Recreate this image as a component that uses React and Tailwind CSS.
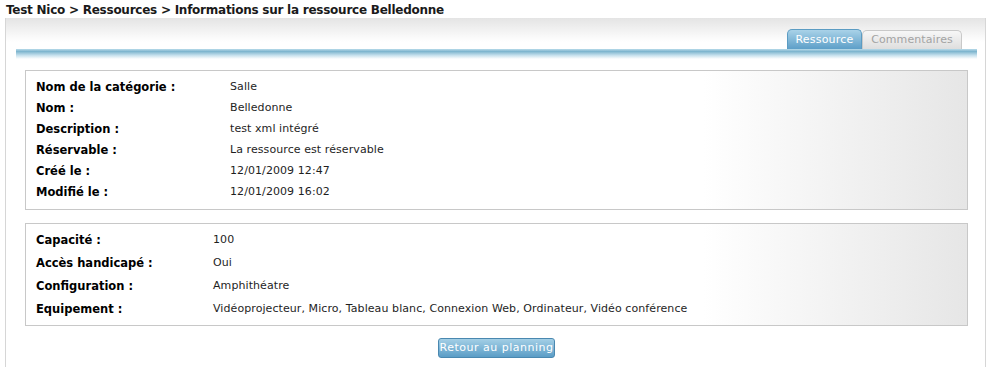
export default function App() {
  const rows1 = [
    ["Nom de la catégorie :", "Salle"],
    ["Nom :", "Belledonne"],
    ["Description :", "test xml intégré"],
    ["Réservable :", "La ressource est réservable"],
    ["Créé le :", "12/01/2009 12:47"],
    ["Modifié le :", "12/01/2009 16:02"],
  ];
  const rows2 = [
    ["Capacité :", "100"],
    ["Accès handicapé :", "Oui"],
    ["Configuration :", "Amphithéatre"],
    ["Equipement :", "Vidéoprojecteur, Micro, Tableau blanc, Connexion Web, Ordinateur, Vidéo conférence"],
  ];
  return (
    <div className="w-[992px] h-[367px] overflow-hidden bg-white text-[#111] font-['DejaVu_Sans',sans-serif]">
      <div className="pl-[6px] pt-[3px] h-[18px] text-[12px] leading-[15px] font-bold tracking-[-0.25px] text-[#1a1a1a]">
        Test Nico &gt; Ressources &gt; Informations sur la ressource Belledonne
      </div>
      <div className="ml-[5px] w-[981px] h-[349px] border-x border-[#d6d6d6] bg-[linear-gradient(to_bottom,#e4e4e4_0px,#ffffff_24px)] pl-[10px] pr-[8px]">
        <div className="flex justify-end pt-[11px] pr-[15px] h-[31px]">
          <div className="w-[75px] h-[20px] rounded-t-[5px] border border-b-0 border-[#5b9cc3] bg-[linear-gradient(to_bottom,#a9d2e8,#5d9fc8)] text-white text-[11px] tracking-[0.2px] leading-[19px] text-center">
            Ressource
          </div>
          <div className="w-[100px] h-[19px] mt-[1px] rounded-t-[5px] border border-b-0 border-[#c9c9c9] bg-[linear-gradient(to_bottom,#f7f7f7,#dedede)] text-[#a3a3a3] text-[11px] tracking-[0.1px] leading-[18px] text-center">
            Commentaires
          </div>
        </div>
        <div className="h-[10px] bg-[linear-gradient(to_bottom,#b9dbea_0%,#7fb6cf_25%,#c9e2ee_65%,#ffffff_100%)]"></div>
        <div className="px-[9px] pt-[11px]">
          <div className="border border-[#c8c8c8] bg-[linear-gradient(to_right,#ffffff_20%,#ffffff_72%,#e6e6e6_100%)] pl-[10px] pt-[6px] h-[140px]">
            {rows1.map(([k, v]) => (
              <div key={k} className="flex h-[21px] items-center">
                <div className="w-[194px] font-bold text-[11.5px] text-black">{k}</div>
                <div className="text-[11px] tracking-[0.08px] text-[#1e1e1e]">{v}</div>
              </div>
            ))}
          </div>
          <div className="mt-[13px] border border-[#c8c8c8] bg-[linear-gradient(to_right,#ffffff_20%,#ffffff_72%,#e6e6e6_100%)] pl-[10px] pt-[5px] h-[103px]">
            {rows2.map(([k, v]) => (
              <div key={k} className="flex h-[23px] items-center">
                <div className="w-[177px] font-bold text-[11.5px] text-black">{k}</div>
                <div className="text-[11px] tracking-[0.08px] text-[#1e1e1e]">{v}</div>
              </div>
            ))}
          </div>
          <div className="flex justify-center pt-[12px]">
            <button className="w-[117px] h-[20px] rounded-[3px] border border-[#4a88b0] bg-[linear-gradient(to_bottom,#a3cfe6,#5b9dc6)] text-white text-[11px] tracking-[0.5px] leading-[18px]">
              Retour au planning
            </button>
          </div>
        </div>
      </div>
    </div>
  );
}
